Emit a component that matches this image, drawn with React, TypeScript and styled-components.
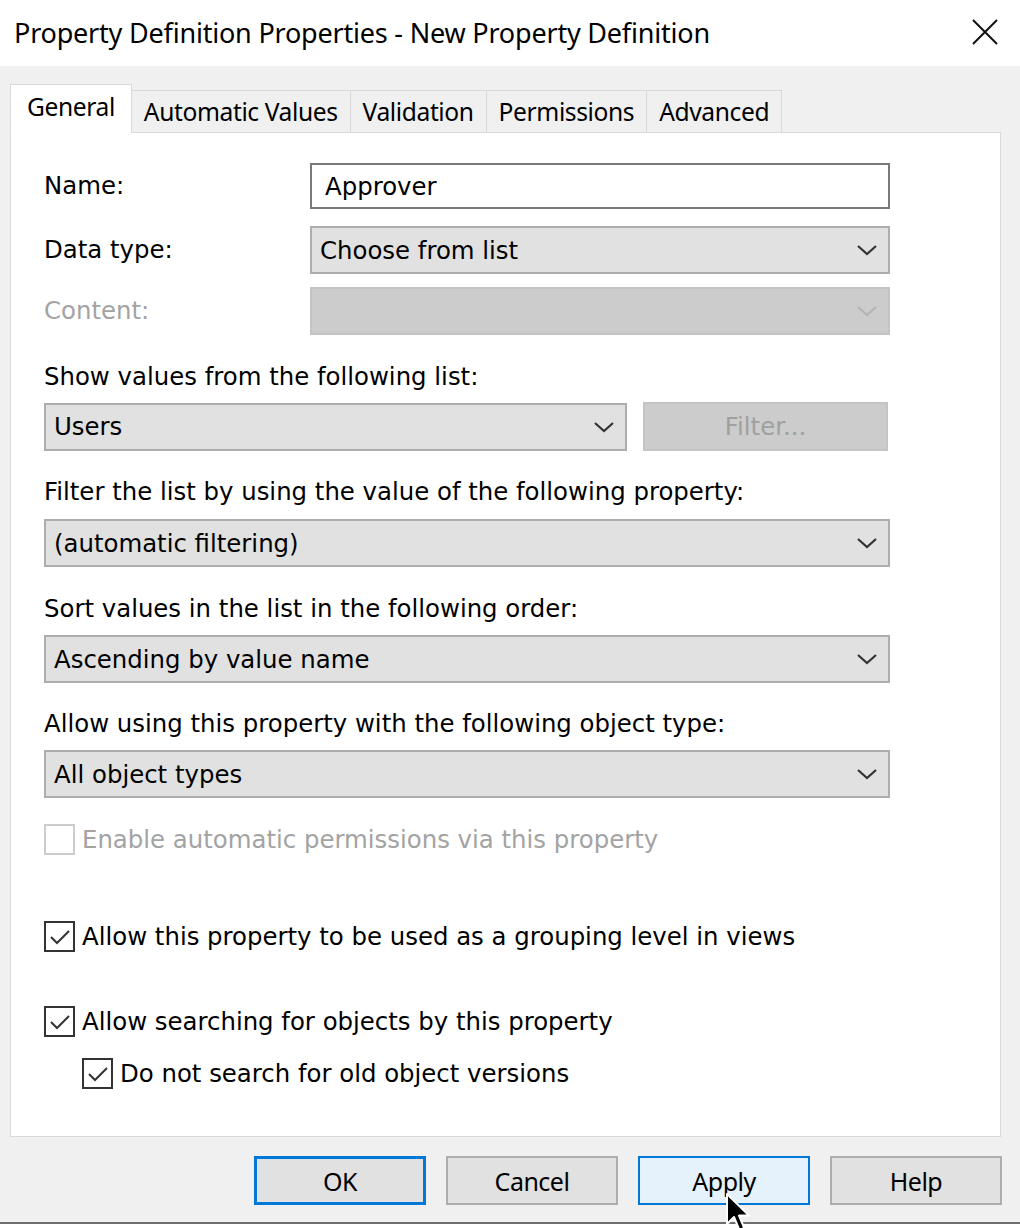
import React from "react";
import styled, { createGlobalStyle } from "styled-components";

const GlobalStyle = createGlobalStyle`
  html, body {
    margin: 0;
    padding: 0;
    background: #f0f0f0;
  }
  * { box-sizing: border-box; }
`;

// Segoe-like face for chrome (title, tabs, buttons), Tahoma-like for the form
const chromeFont = `"Noto Sans", "Open Sans", sans-serif`;
const formFont = `"DejaVu Sans", Tahoma, sans-serif`;

const Dialog = styled.div`
  width: 1020px;
  height: 1228px;
  background: #f0f0f0;
  display: flex;
  flex-direction: column;
  position: relative;
  overflow: hidden;
  font-family: ${chromeFont};
  color: #000;
`;

const TitleBar = styled.div`
  height: 66px;
  background: #ffffff;
  display: flex;
  align-items: center;
  justify-content: space-between;
  padding: 0 22px 2px 14px;
`;

const TitleText = styled.div`
  font-size: 27px;
  letter-spacing: -0.2px;
  color: #000;
`;

const Body = styled.div`
  flex: 1;
  display: flex;
  flex-direction: column;
  padding: 18px 18px 0 10px;
`;

const TabStrip = styled.div`
  display: flex;
  align-items: flex-end;
  height: 49px;
  position: relative;
  z-index: 1;
`;

const Tab = styled.div<{ $active?: boolean }>`
  height: ${(p) => (p.$active ? "49px" : "43px")};
  padding: 0 ${(p) => (p.$active ? "16px" : "12px")};
  display: flex;
  align-items: center;
  justify-content: center;
  font-size: 24.6px;
  letter-spacing: -0.4px;
  background: ${(p) => (p.$active ? "#ffffff" : "#f0f0f0")};
  border: 1px solid #d9d9d9;
  border-bottom: ${(p) => (p.$active ? "1px solid #ffffff" : "1px solid #d9d9d9")};
  margin-left: ${(p) => (p.$active ? "0" : "-1px")};
  padding-bottom: ${(p) => (p.$active ? "4px" : "0")};
`;

const Panel = styled.div`
  width: 991px;
  height: 1005px;
  margin-top: -1px;
  background: #ffffff;
  border: 1px solid #d9d9d9;
  padding: 30px 0 0 33px;
  display: flex;
  flex-direction: column;
  font-family: ${formFont};
`;

const FieldRow = styled.div<{ $mt?: number }>`
  display: flex;
  align-items: center;
  margin-top: ${(p) => p.$mt ?? 0}px;
`;

const Label = styled.div<{ $disabled?: boolean; $width?: number }>`
  font-size: 24.4px;
  line-height: 30px;
  width: ${(p) => (p.$width ? `${p.$width}px` : "auto")};
  color: ${(p) => (p.$disabled ? "#a3a3a3" : "#000")};
  white-space: nowrap;
`;

const Caption = styled(Label)<{ $mt?: number }>`
  margin-top: ${(p) => p.$mt ?? 0}px;
`;

const TextInput = styled.div`
  width: 580px;
  height: 46px;
  border: 2px solid #7a7a7a;
  background: #ffffff;
  display: flex;
  align-items: center;
  padding-left: 13px;
  font-size: 24.4px;
`;

const Select = styled.div<{ $width: number; $disabled?: boolean; $mt?: number }>`
  width: ${(p) => p.$width}px;
  height: 48px;
  flex-shrink: 0;
  margin-top: ${(p) => p.$mt ?? 0}px;
  background: ${(p) => (p.$disabled ? "#cccccc" : "#e1e1e1")};
  border: 2px solid ${(p) => (p.$disabled ? "#c4c4c4" : "#adadad")};
  display: flex;
  align-items: center;
  justify-content: space-between;
  padding: 0 10px 0 8px;
  font-size: 24.4px;
  color: #000;
`;

const SplitRow = styled.div`
  display: flex;
  align-items: center;
  margin-top: 10px;
  gap: 16px;
`;

const DisabledButton = styled.div`
  width: 245px;
  height: 49px;
  background: #cccccc;
  border: 2px solid #c4c4c4;
  display: flex;
  align-items: center;
  justify-content: center;
  font-size: 24.4px;
  color: #a0a0a0;
`;

const CheckRow = styled.div<{ $mt?: number; $indent?: number }>`
  display: flex;
  align-items: center;
  gap: 7px;
  margin-top: ${(p) => p.$mt ?? 0}px;
  margin-left: ${(p) => p.$indent ?? 0}px;
`;

const Box = styled.div<{ $disabled?: boolean }>`
  width: 31px;
  height: 31px;
  border: 2px solid ${(p) => (p.$disabled ? "#cccccc" : "#333333")};
  background: #ffffff;
  display: flex;
  align-items: center;
  justify-content: center;
`;

const Footer = styled.div`
  display: flex;
  justify-content: flex-end;
  gap: 20px;
  padding-top: 19px;
  position: relative;
`;

const Button = styled.div<{ $variant?: "default" | "hover" | "plain" }>`
  width: 172px;
  height: 49px;
  display: flex;
  align-items: center;
  justify-content: center;
  font-size: 25px;
  letter-spacing: -0.5px;
  color: #000;
  background: ${(p) => (p.$variant === "hover" ? "#e5f1fb" : "#e1e1e1")};
  border: ${(p) =>
    p.$variant === "default"
      ? "3px solid #0078d7"
      : p.$variant === "hover"
      ? "2px solid #0078d7"
      : "2px solid #adadad"};
`;

const Cursor = styled.svg`
  position: absolute;
  left: 725px;
  top: 1192px;
  z-index: 5;
`;

const BottomEdge = styled.div`
  position: absolute;
  left: 0;
  right: 0;
  bottom: 0;
  height: 6px;
  border-top: 2px solid #6e6e6e;
  background: #ffffff;
`;

const Chevron: React.FC<{ disabled?: boolean }> = ({ disabled }) => (
  <svg width="22" height="14" viewBox="0 0 22 14">
    <polyline
      points="2,3 11,11 20,3"
      fill="none"
      stroke={disabled ? "#b4b4b4" : "#333333"}
      strokeWidth="2.2"
    />
  </svg>
);

const Check: React.FC = () => (
  <svg width="24" height="20" viewBox="0 0 24 20">
    <polyline
      points="3,10 9,16 21,4"
      fill="none"
      stroke="#333333"
      strokeWidth="2"
    />
  </svg>
);

const CheckBox: React.FC<{
  label: string;
  checked?: boolean;
  disabled?: boolean;
  mt?: number;
  indent?: number;
}> = ({ label, checked, disabled, mt, indent }) => (
  <CheckRow $mt={mt} $indent={indent}>
    <Box $disabled={disabled}>{checked && <Check />}</Box>
    <Label $disabled={disabled}>{label}</Label>
  </CheckRow>
);

const tabs = ["General", "Automatic Values", "Validation", "Permissions", "Advanced"];

export default function App() {
  return (
    <Dialog>
      <GlobalStyle />
      <TitleBar>
        <TitleText>Property Definition Properties - New Property Definition</TitleText>
        <svg width="26" height="26" viewBox="0 0 26 26">
          <path d="M1 1 L25 25 M25 1 L1 25" stroke="#111" strokeWidth="2" />
        </svg>
      </TitleBar>

      <Body>
        <TabStrip>
          {tabs.map((t, i) => (
            <Tab key={t} $active={i === 0}>
              {t}
            </Tab>
          ))}
        </TabStrip>

        <Panel>
          <FieldRow>
            <Label $width={266}>Name:</Label>
            <TextInput>Approver</TextInput>
          </FieldRow>
          <FieldRow $mt={17}>
            <Label $width={266}>Data type:</Label>
            <Select $width={580}>
              Choose from list
              <Chevron />
            </Select>
          </FieldRow>
          <FieldRow $mt={13}>
            <Label $width={266} $disabled>
              Content:
            </Label>
            <Select $width={580} $disabled>
              <span />
              <Chevron disabled />
            </Select>
          </FieldRow>

          <Caption $mt={27}>Show values from the following list:</Caption>
          <SplitRow>
            <Select $width={583}>
              Users
              <Chevron />
            </Select>
            <DisabledButton>Filter...</DisabledButton>
          </SplitRow>

          <Caption $mt={26}>Filter the list by using the value of the following property:</Caption>
          <Select $width={846} $mt={12}>
            (automatic filtering)
            <Chevron />
          </Select>

          <Caption $mt={27}>Sort values in the list in the following order:</Caption>
          <Select $width={846} $mt={11}>
            Ascending by value name
            <Chevron />
          </Select>

          <Caption $mt={26}>Allow using this property with the following object type:</Caption>
          <Select $width={846} $mt={11}>
            All object types
            <Chevron />
          </Select>

          <CheckBox mt={26} disabled label="Enable automatic permissions via this property" />
          <CheckBox mt={66} checked label="Allow this property to be used as a grouping level in views" />
          <CheckBox mt={54} checked label="Allow searching for objects by this property" />
          <CheckBox mt={21} indent={38} checked label="Do not search for old object versions" />
        </Panel>

        <Footer>
          <Button $variant="default">OK</Button>
          <Button $variant="plain">Cancel</Button>
          <Button $variant="hover">Apply</Button>
          <Button $variant="plain">Help</Button>
        </Footer>
      </Body>

      <Cursor width="28" height="42" viewBox="0 0 14 21">
        <path
          d="M1 1 L1 16 L4.5 12.5 L7.2 19 L9.6 18 L7 11.8 L12 11.8 Z"
          fill="#000"
          stroke="#fff"
          strokeWidth="1"
          strokeLinejoin="round"
        />
      </Cursor>
      <BottomEdge />
    </Dialog>
  );
}
